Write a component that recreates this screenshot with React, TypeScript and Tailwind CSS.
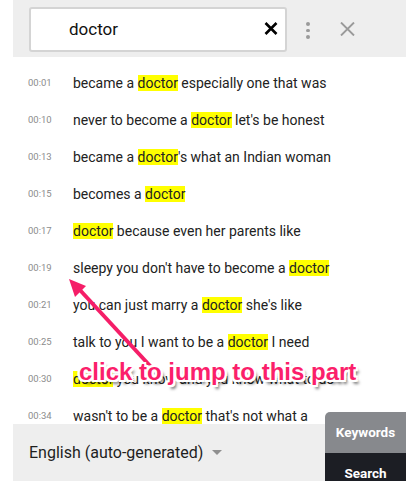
import React from "react";

type Row = { t: string; before: string; hit?: string; after?: string };

const rows: Row[] = [
  { t: "00:01", before: "became a ", hit: "doctor", after: " especially one that was" },
  { t: "00:10", before: "never to become a ", hit: "doctor", after: " let's be honest" },
  { t: "00:13", before: "became a ", hit: "doctor", after: "'s what an Indian woman" },
  { t: "00:15", before: "becomes a ", hit: "doctor", after: "" },
  { t: "00:17", before: "", hit: "doctor", after: " because even her parents like" },
  { t: "00:19", before: "sleepy you don't have to become a ", hit: "doctor", after: "" },
  { t: "00:21", before: "you can just marry a ", hit: "doctor", after: " she's like" },
  { t: "00:25", before: "talk to you I want to be a ", hit: "doctor", after: " I need" },
  { t: "00:30", before: "", hit: "doctor", after: " you know and you know what to do" },
  { t: "00:34", before: "wasn't to be a ", hit: "doctor", after: " that's not what a" },
];

export default function App() {
  return (
    <div className="relative w-[406px] h-[481px] overflow-hidden bg-white font-['Roboto',sans-serif]">
      <div className="flex flex-col h-full">
        {/* Header */}
        <div className="ml-[13px] h-[57px] shrink-0 bg-[#eeeeee] flex items-start pt-[7px]">
          <div className="ml-[16px] w-[258px] h-[45px] border-2 border-[#d4d4d4] rounded-[3px] bg-white flex items-center pl-[38px] pr-[7px]">
            <span className="flex-1 text-[17px] text-[#111] leading-none">doctor</span>
            <svg width="14" height="13" viewBox="0 0 14 13" className="mb-[3px]">
              <path d="M1.5 1 L12.5 12 M12.5 1 L1.5 12" stroke="#000" strokeWidth="2.6" strokeLinecap="butt" />
            </svg>
          </div>
          <div className="ml-[19px] mt-[15px] flex flex-col gap-[3px]">
            <span className="block w-[3.5px] h-[3.5px] rounded-full bg-[#9a9a9a]" />
            <span className="block w-[3.5px] h-[3.5px] rounded-full bg-[#9a9a9a]" />
            <span className="block w-[3.5px] h-[3.5px] rounded-full bg-[#9a9a9a]" />
          </div>
          <svg width="15" height="14" viewBox="0 0 15 14" className="ml-[30px] mt-[15px]">
            <path d="M1 0.5 L14 13.5 M14 0.5 L1 13.5" stroke="#9a9a9a" strokeWidth="1.9" />
          </svg>
        </div>

        {/* Transcript list */}
        <div className="flex-1 overflow-hidden pt-[8px] pl-[28px]">
          {rows.map((r) => (
            <div key={r.t} className="h-[37px] flex items-center whitespace-nowrap">
              <span className="w-[45px] shrink-0 text-[9.5px] text-[#8c8c8c]">{r.t}</span>
              <span className="text-[14px] text-[#222222]">
                {r.before}
                {r.hit && <span className="bg-[#ffff00]">{r.hit}</span>}
                {r.after}
              </span>
            </div>
          ))}
        </div>

        {/* Footer */}
        <div className="h-[57px] shrink-0 flex ml-[13px] relative z-10">
          <div className="flex-1 bg-[#eeeeee] flex items-center pl-[16px] gap-[9px]">
            <span className="text-[16px] text-[#1e1e1e]">English (auto-generated)</span>
            <svg width="10" height="5" viewBox="0 0 10 5">
              <path d="M0 0 L10 0 L5 5 Z" fill="#8f8f8f" />
            </svg>
          </div>
          <div className="w-[81px] -mt-[12px] flex flex-col">
            <div className="h-[41px] bg-[#87898d] rounded-tl-[5px] flex items-center justify-center text-white text-[13.5px] font-bold">
              Keywords
            </div>
            <div className="flex-1 bg-[#1c1e24] flex justify-center pt-[13px] text-white text-[13.5px] font-bold leading-[15px]">
              Search
            </div>
          </div>
        </div>
      </div>

      {/* Annotation overlay */}
      <svg className="absolute left-0 top-0 pointer-events-none" width="406" height="481">
        <line x1="152" y1="368" x2="79" y2="289" stroke="#f51e68" strokeWidth="4" />
        <polygon points="69,279 86,286 75,297" fill="#f51e68" />
      </svg>
      <div className="absolute left-[79px] top-[358px] text-[24px] font-bold font-['Liberation_Sans',Arial,sans-serif] text-[#fb1f6b] whitespace-nowrap leading-[28px] [text-shadow:-2px_-2px_0_#fff,2px_-2px_0_#fff,-2px_2px_0_#fff,2px_2px_0_#fff,0_2px_0_#fff,0_-2px_0_#fff,2px_0_0_#fff,-2px_0_0_#fff,3px_4px_3px_rgba(0,0,0,0.55)]">
        click to jump to this part
      </div>
    </div>
  );
}
